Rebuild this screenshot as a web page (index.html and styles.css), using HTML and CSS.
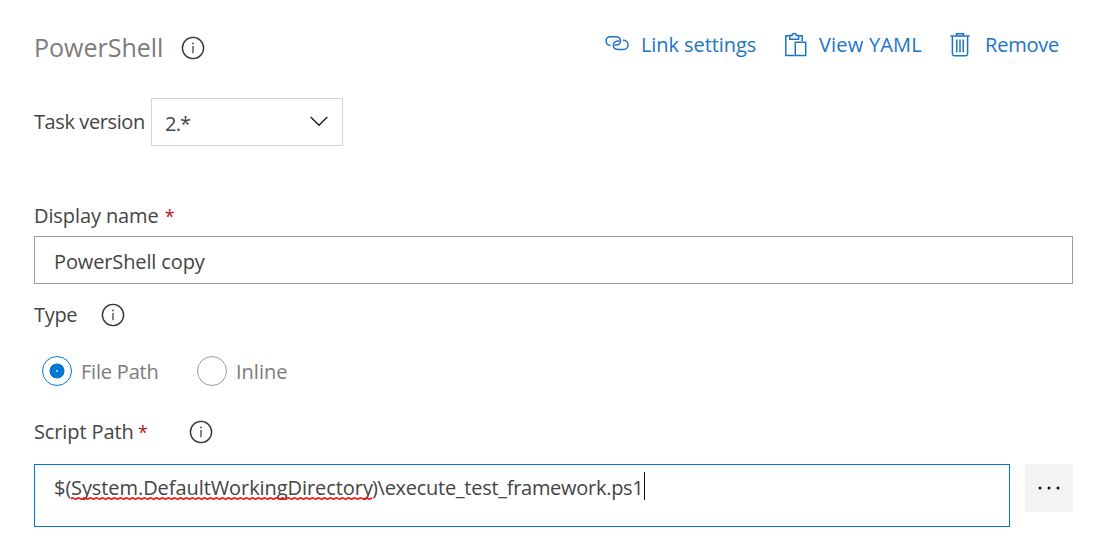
FILE: index.html
```
<!DOCTYPE html>
<html lang="en">
<head>
<meta charset="utf-8">
<title>PowerShell task</title>
<link rel="stylesheet" href="styles.css">
</head>
<body>
<svg class="defs" width="0" height="0" aria-hidden="true">
  <symbol id="info" viewBox="0 0 24 24"><circle cx="12" cy="12" r="10.6" fill="none" stroke="#333" stroke-width="1.4"/><path d="M12 10v7.2" stroke="#444" stroke-width="1.3"/><circle cx="12" cy="7.4" r=".9" fill="#444"/></symbol>
  <pattern id="wave" width="6" height="3" patternUnits="userSpaceOnUse"><path d="M-1.5 2.2L1.5 .8 4.5 2.2 7.5 .8" fill="none" stroke="#f11" stroke-width="1.6"/></pattern>
</svg>
<main class="panel">
  <header class="header">
    <h1 class="title"><span class="t-title">PowerShell</span></h1>
    <svg class="info"><use href="#info"/></svg>
    <nav class="actions">
      <a class="action link"><svg width="26" height="18" viewBox="0 0 26 18"><g fill="none" stroke="#1b74c5" stroke-width="1.5"><path d="M6.6 10.4A4.4 4.4 0 0 1 5.6 1.7H11.3C18.3 1.7 18 10 12 10H10.5"/><path d="M19 5.2A4.7 4.7 0 0 1 19.6 14.6H14.5C7.5 14.6 8 6 14 6H15.5"/></g></svg><span class="t-link">Link settings</span></a>
      <a class="action yaml"><svg width="24" height="26" viewBox="0 0 24 26"><g fill="none" stroke="#1b74c5" stroke-width="1.5"><path d="M10.3 23.5H1.8V3.8H6M14 3.8h4.2V9M5.8 3.5v3.8h8.8V3.5H12.3a2.1 2.1 0 0 0-4.2 0zM11.3 10.3h10.4v13.2H11.3z"/></g></svg><span class="t-yaml">View YAML</span></a>
      <a class="action remove"><svg width="20" height="26" viewBox="0 0 20 26"><g fill="none" stroke="#1b74c5" stroke-width="1.5"><path d="M.3 4h19.4M6.5 4V1.7h7V4M2.4 4v18q0 1.7 1.7 1.7h11.8q1.7 0 1.7-1.7V4M6.8 7.5v12.7M10 7.5v12.7M13.2 7.5v12.7"/></g></svg><span class="t-remove">Remove</span></a>
    </nav>
  </header>
  <div class="version">
    <span class="t-version">Task version</span>
    <div class="select"><span class="t-two">2.*</span><svg width="18" height="11" viewBox="0 0 18 11"><path d="M.7 1L9 9.3 17.3 1" fill="none" stroke="#222" stroke-width="1.5"/></svg></div>
  </div>
  <div class="label name"><span class="t-name">Display name</span><span class="req">*</span></div>
  <div class="input"><span class="t-copy">PowerShell copy</span></div>
  <div class="label type"><span class="t-type">Type</span><svg class="info"><use href="#info"/></svg></div>
  <div class="radios">
    <span class="radio on"></span><span class="t-file">File Path</span>
    <span class="radio off"></span><span class="t-inline">Inline</span>
  </div>
  <div class="label script"><span class="t-script">Script Path</span><span class="req">*</span><svg class="info"><use href="#info"/></svg></div>
  <div class="path-row">
    <div class="path"><span class="t-a">$(</span><span class="t-b">System.DefaultWorkingDirectory<svg class="squiggle"><rect width="100%" height="3" fill="url(#wave)"/></svg></span><span class="t-c">)\execute_test_framework.ps1</span><span class="caret"></span></div>
    <div class="more"><svg width="24" height="6" viewBox="0 0 24 6"><g fill="#111"><circle cx="3" cy="3" r="1.5"/><circle cx="12" cy="3" r="1.5"/><circle cx="21" cy="3" r="1.5"/></g></svg></div>
  </div>
</main>
</body>
</html>
```
FILE: styles.css
```
* { box-sizing: border-box; }
body { margin: 0; background: #fff; color: #444; font: 400 20px/28px "Open Sans", "Noto Sans", sans-serif; }
svg { display: block; flex: none; }
.defs { position: absolute; }
span { white-space: pre; flex: none; }
.panel { width: 1100px; height: 541px; padding: 30px 27px 0 34px; overflow: hidden; }
.header { display: flex; height: 36px; align-items: center; }
.title { margin: 0 0 2px; width: 147px; font-size: 25px; font-weight: 400; color: #7c7c7c; line-height: 36px; }
.info { width: 24px; height: 24px; }
.actions { display: flex; margin-left: 399px; height: 28px; margin-top: -5px; color: #1b74c5; }
.action { display: flex; align-items: center; }
.action span { margin-top: -2px; }
.link { width: 180px; gap: 11px; }
.link svg { margin-top: -3px; }
.t-link { letter-spacing: -.08px; }
.yaml { width: 166px; gap: 11px; }
.yaml svg, .remove svg { margin-top: -1px; }
.t-yaml { letter-spacing: .2px; }
.remove { gap: 15px; }
.t-remove { letter-spacing: -.2px; }
.version { display: flex; align-items: center; height: 48px; margin-top: 32px; }
.version > .t-version { width: 117px; letter-spacing: -.4px; }
.select { display: flex; align-items: center; justify-content: space-between; width: 192px; height: 48px; border: 1px solid #d4d4d4; padding: 4px 14px 0 13px; }
.t-two { letter-spacing: -.8px; }
.select svg { margin-top: -6px; }
.label { display: flex; align-items: center; height: 28px; }
.name { margin-top: 56px; }
.t-name { letter-spacing: -.1px; }
.req { color: #b5121b; margin-left: 6px; font-size: 18px; }
.input { display: flex; align-items: center; height: 48px; margin-top: 6px; border: 1px solid #9c9c9c; padding: 3px 0 0 19px; }
.t-copy { letter-spacing: -.13px; }
.type { margin-top: 17px; }
.type .t-type { width: 67px; letter-spacing: -.3px; }
.type .info, .script .info { margin-top: -1px; margin-left: -.5px; }
.radios { display: flex; align-items: center; height: 30px; margin-top: 27px; padding-left: 8px; color: #7b7b7b; }
.radio { width: 30px; height: 30px; border-radius: 50%; border: 1px solid #999; margin-right: 9px; }
.radio.on { border-color: #0078d4; background: radial-gradient(circle, #fff 0 .6px, #0078d4 .9px 7.2px, #fff 7.8px); }
.t-file { width: 116px; letter-spacing: -.2px; }
.t-file, .t-inline { padding-top: 1px; }
.script { margin-top: 32px; }
.script .t-script { width: 98px; letter-spacing: -.12px; }
.script .req { width: 51px; }
.path-row { display: flex; margin-top: 18px; gap: 15px; }
.path { display: flex; align-items: flex-start; width: 976px; height: 63px; border: 1px solid #0078d4; padding: 9px 0 0 19px; }
.t-a { width: 17px; }
.t-b { position: relative; width: 301px; letter-spacing: -.07px; }
.t-c { letter-spacing: -.28px; }
.squiggle { position: absolute; left: 0; top: 23px; width: 301px; height: 3px; }
.caret { width: 1px; height: 28px; margin-top: -2px; background: #111; }
.more { display: flex; align-items: center; justify-content: center; width: 48px; height: 48px; background: #f3f3f3; }
```
